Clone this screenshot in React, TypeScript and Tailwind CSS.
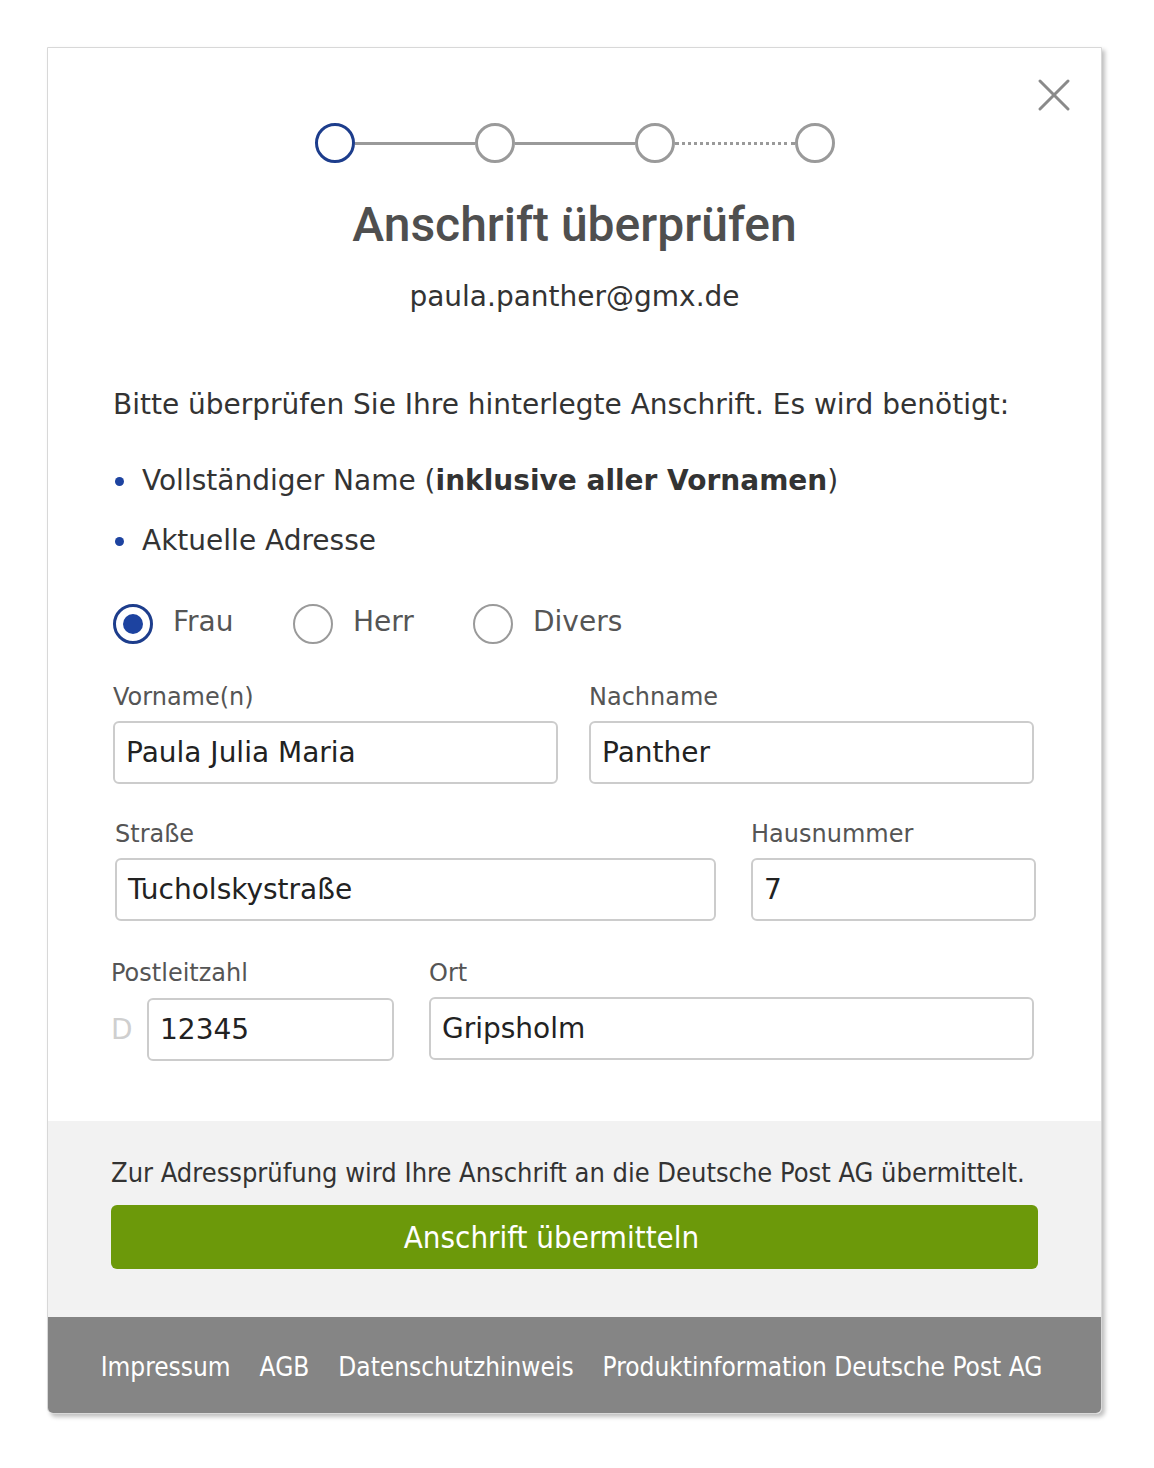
import { X } from "lucide-react";

const body = "font-['DejaVu_Sans',sans-serif]";
const cond = "font-['DejaVu_Sans_Condensed','DejaVu_Sans',sans-serif]";

function Step({ active }: { active?: boolean }) {
  return (
    <div
      className={
        "w-[40px] h-[40px] rounded-full border-[3px] bg-white shrink-0 " +
        (active ? "border-[#1d3d8c]" : "border-[#9a9a9a]")
      }
    />
  );
}

function Radio({ label, checked }: { label: string; checked?: boolean }) {
  return (
    <div className="flex items-center w-[180px]">
      {checked ? (
        <div className="w-[40px] h-[40px] rounded-full border-[3px] border-[#1d3d8c] flex items-center justify-center">
          <div className="w-[20px] h-[20px] rounded-full bg-[#1d43a0]" />
        </div>
      ) : (
        <div className="w-[40px] h-[40px] rounded-full border-2 border-[#9a9a9a]" />
      )}
      <span className="ml-[20px] text-[28px] text-[#555] leading-none -mt-[4px]">{label}</span>
    </div>
  );
}

function Field({ label, value, w }: { label: string; value: string; w: string }) {
  return (
    <div className={w}>
      <div className="text-[24px] leading-[26px] text-[#555] mb-[11px]">{label}</div>
      <div className="h-[63px] border-2 border-[#cccccc] rounded-[6px] flex items-center px-[11px] text-[28px] text-[#222]">
        {value}
      </div>
    </div>
  );
}

export default function App() {
  return (
    <div className={"min-h-[1468px] bg-white pt-[47px] pl-[47px] " + body}>
      <div className="relative w-[1055px] rounded-b-[6px] border border-[#d8d8d8] shadow-[3px_3px_4px_rgba(0,0,0,0.25)] overflow-hidden">
        {/* close */}
        <button className="absolute top-[19px] right-[19px] text-[#8a8a8a]">
          <X size={56} strokeWidth={1.3} />
        </button>

        {/* white area */}
        <div className="bg-white pt-[75px] pb-[60px] px-[65px]">
          {/* stepper */}
          <div className="flex items-center justify-center">
            <Step active />
            <div className="w-[120px] h-[3px] bg-[#9a9a9a]" />
            <Step />
            <div className="w-[120px] h-[3px] bg-[#9a9a9a]" />
            <Step />
            <div className="w-[120px] border-t-[3px] border-dotted border-[#9a9a9a]" />
            <Step />
          </div>

          <h1 className="mt-[33px] text-center font-['Roboto',sans-serif] font-medium text-[48px] leading-[58px] text-[#4f4f4f]">
            Anschrift überprüfen
          </h1>
          <p className="mt-[25px] text-center text-[28px] leading-[36px] text-[#333]">paula.panther@gmx.de</p>

          <p className="mt-[72px] text-[28px] leading-[36px] text-[#333]">
            Bitte überprüfen Sie Ihre hinterlegte Anschrift. Es wird benötigt:
          </p>
          <ul className="mt-[40px] flex flex-col gap-[24px] text-[28px] leading-[36px] text-[#333]">
            <li className="flex items-center">
              <span className="w-[9px] h-[9px] rounded-full bg-[#1d43a0] ml-[2px] mr-[18px]" />
              <span>
                Vollständiger Name (<b>inklusive aller Vornamen</b>)
              </span>
            </li>
            <li className="flex items-center">
              <span className="w-[9px] h-[9px] rounded-full bg-[#1d43a0] ml-[2px] mr-[18px]" />
              <span>Aktuelle Adresse</span>
            </li>
          </ul>

          <div className="mt-[45px] flex">
            <Radio label="Frau" checked />
            <Radio label="Herr" />
            <Radio label="Divers" />
          </div>

          <div className="mt-[40px] flex gap-[31px]">
            <Field label="Vorname(n)" value="Paula Julia Maria" w="w-[445px]" />
            <Field label="Nachname" value="Panther" w="w-[445px]" />
          </div>

          <div className="mt-[37px] ml-[2px] flex gap-[35px]">
            <Field label="Straße" value="Tucholskystraße" w="w-[601px]" />
            <Field label="Hausnummer" value="7" w="w-[285px]" />
          </div>

          <div className="mt-[39px] -ml-[2px] flex gap-[35px]">
            <div>
              <div className="text-[24px] leading-[26px] text-[#555] mb-[12px]">Postleitzahl</div>
              <div className="flex items-center">
                <span className="w-[36px] text-[28px] text-[#cfcfcf]">D</span>
                <div className="w-[247px] h-[63px] border-2 border-[#cccccc] rounded-[6px] flex items-center px-[11px] text-[28px] text-[#222]">
                  12345
                </div>
              </div>
            </div>
            <Field label="Ort" value="Gripsholm" w="w-[605px]" />
          </div>
        </div>

        {/* grey section */}
        <div className={"bg-[#f2f2f2] pt-[36px] pb-[48px] px-[63px] " + cond}>
          <p className="text-[27px] leading-[32px] text-[#333]">
            Zur Adressprüfung wird Ihre Anschrift an die Deutsche Post AG übermittelt.
          </p>
          <button className="mt-[16px] w-full h-[64px] rounded-[6px] bg-[#6c990a] text-white text-[31px] pr-[46px]">
            Anschrift übermitteln
          </button>
        </div>

        {/* footer */}
        <div className={"bg-[#858585] h-[96px] pt-[4px] pr-[6px] flex items-center justify-center gap-[29px] text-white text-[26px] " + cond}>
          <span>Impressum</span>
          <span>AGB</span>
          <span>Datenschutzhinweis</span>
          <span>Produktinformation Deutsche Post AG</span>
        </div>
      </div>
    </div>
  );
}
